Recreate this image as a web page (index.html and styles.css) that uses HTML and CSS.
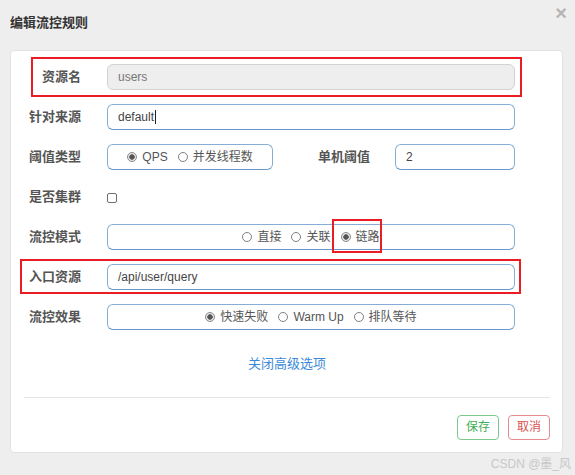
FILE: index.html
```html
<!DOCTYPE html>
<html lang="zh">
<head>
<meta charset="utf-8">
<title>编辑流控规则</title>
<link rel="stylesheet" href="styles.css">
</head>
<body>
<div class="header">
  <h1 class="title">编辑流控规则</h1>
  <span class="close">×</span>
</div>
<div class="card">
  <div class="row">
    <span class="lbl">资源名</span>
    <div class="ctl"><div class="input disabled">users</div></div>
  </div>
  <div class="row">
    <span class="lbl">针对来源</span>
    <div class="ctl"><div class="input">default<span class="caret"></span></div></div>
  </div>
  <div class="row">
    <span class="lbl">阈值类型</span>
    <div class="ctl split">
      <div class="radios narrow">
        <span class="opt"><span class="radio on"></span>QPS</span>
        <span class="opt"><span class="radio"></span>并发线程数</span>
      </div>
      <span class="lbl inner">单机阈值</span>
      <div class="input small">2</div>
    </div>
  </div>
  <div class="row">
    <span class="lbl">是否集群</span>
    <div class="ctl"><span class="checkbox"></span></div>
  </div>
  <div class="row">
    <span class="lbl">流控模式</span>
    <div class="ctl">
      <div class="radios">
        <span class="opt"><span class="radio"></span>直接</span>
        <span class="opt"><span class="radio"></span>关联</span>
        <span class="opt"><span class="radio on"></span>链路</span>
      </div>
    </div>
  </div>
  <div class="row">
    <span class="lbl">入口资源</span>
    <div class="ctl"><div class="input">/api/user/query</div></div>
  </div>
  <div class="row">
    <span class="lbl">流控效果</span>
    <div class="ctl">
      <div class="radios">
        <span class="opt"><span class="radio on"></span>快速失败</span>
        <span class="opt"><span class="radio"></span>Warm Up</span>
        <span class="opt"><span class="radio"></span>排队等待</span>
      </div>
    </div>
  </div>
  <div class="more"><a class="link" href="#">关闭高级选项</a></div>
  <div class="actions">
    <button class="btn save">保存</button>
    <button class="btn cancel">取消</button>
  </div>
  <div class="mark mark-name"></div>
  <div class="mark mark-chain"></div>
  <div class="mark mark-entry"></div>
</div>
<div class="footer">CSDN @墨_风</div>
</body>
</html>
```

FILE: styles.css
```css
* { box-sizing: border-box; }

body {
  margin: 0;
  background: #eeeeee;
  font-family: "Liberation Sans", "Noto Sans CJK SC", sans-serif;
  color: #555;
}

.header {
  height: 50px;
  display: flex;
  justify-content: space-between;
  align-items: flex-start;
  padding: 0 8px 0 10px;
}

.title {
  margin: 14px 0 0;
  font-size: 13px;
  line-height: 18px;
  font-weight: bold;
  color: #333;
}

.close {
  margin-top: 3px;
  font-size: 20px;
  line-height: 20px;
  font-weight: bold;
  color: #b5b5b5;
}

.card {
  position: relative;
  margin: 0 12px 0 10px;
  background: #fff;
  border: 1px solid #e2e2e2;
  border-radius: 4px;
  padding: 6px 12px 12px 13px;
}

.row {
  display: flex;
  align-items: center;
  height: 40px;
}

.lbl {
  width: 57px;
  flex: none;
  margin-right: 26px;
  text-align: right;
  font-size: 13px;
  line-height: 18px;
  font-weight: bold;
  color: #555;
  white-space: nowrap;
}

.ctl {
  width: 408px;
  display: flex;
  align-items: center;
}

.input {
  width: 100%;
  height: 26px;
  border: 1px solid #86add6;
  border-bottom-color: #6a98c8;
  border-radius: 6px;
  padding: 0 10px;
  font-size: 12px;
  line-height: 24px;
  color: #444;
  display: flex;
  align-items: center;
}

.input.disabled {
  background: #eeeeee;
  border-color: #d2d2d2;
  color: #777;
}

.input.small {
  width: 120px;
  flex: none;
}

.caret {
  display: inline-block;
  width: 1px;
  height: 14px;
  background: #222;
  margin-left: 1px;
}

.lbl.inner {
  width: 97px;
  margin-right: 25px;
}

.radios {
  width: 100%;
  height: 26px;
  border: 1px solid #86add6;
  border-bottom-color: #6a98c8;
  border-radius: 6px;
  display: flex;
  justify-content: center;
  align-items: center;
  gap: 10px;
}

.radios.narrow {
  width: 166px;
  flex: none;
}

.opt {
  display: flex;
  align-items: center;
  gap: 5px;
  font-size: 12px;
  line-height: 16px;
  color: #555;
  white-space: nowrap;
}

.radio {
  width: 10px;
  height: 10px;
  border: 1px solid #808080;
  border-radius: 50%;
  background: #fff;
  flex: none;
}

.radio.on {
  border-color: #8a8a8a;
  background: radial-gradient(circle, #555 0, #555 2.4px, #e4e4e4 3px);
}

.checkbox {
  display: block;
  width: 10px;
  height: 10px;
  border: 1px solid #707070;
  border-radius: 2px;
  margin-top: 2px;
}

.more {
  margin-top: 17px;
  height: 20px;
  text-align: center;
  font-size: 13px;
  line-height: 20px;
}

.link {
  color: #3b8ad8;
  text-decoration: none;
}

.actions {
  margin-top: 23px;
  border-top: 1px solid #e5e5e5;
  padding-top: 17px;
  display: flex;
  justify-content: flex-end;
  gap: 9px;
}

.btn {
  width: 42px;
  height: 25px;
  padding: 0;
  background: #fff;
  border-radius: 4px;
  font-family: inherit;
  font-size: 12px;
  line-height: 23px;
}

.btn.save {
  border: 1px solid #7dc98a;
  color: #3fae55;
}

.btn.cancel {
  border: 1px solid #e58a8e;
  color: #d9534f;
}

.mark {
  position: absolute;
  border: 2px solid #ea1d24;
  pointer-events: none;
}

.mark-name { left: 20px; top: 6px; width: 491px; height: 40px; }
.mark-chain { left: 321px; top: 168px; width: 50px; height: 34px; }
.mark-entry { left: 9px; top: 208px; width: 501px; height: 35px; }

.footer {
  height: 22px;
  padding-right: 4px;
  text-align: right;
  font-size: 12px;
  line-height: 22px;
  color: #c8c8c8;
}
```
